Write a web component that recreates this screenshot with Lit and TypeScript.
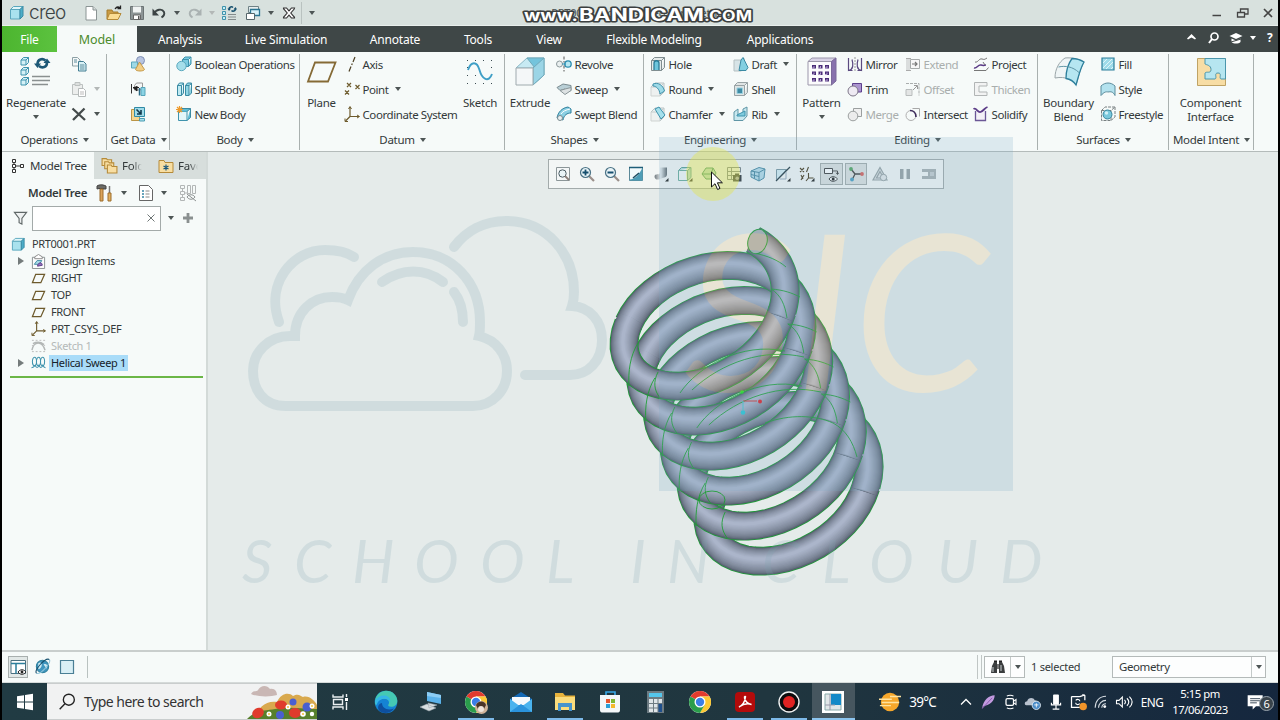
import { LitElement, html, css, svg, nothing } from 'lit';
import { customElement, property } from 'lit/decorators.js';
import { classMap } from 'lit/directives/class-map.js';
import { styleMap } from 'lit/directives/style-map.js';

const cube = svg`<path d="M1.5 4.5h9.5v9.5h-9.500z" fill="#a9e2ee" stroke="#5aa7bd"/><path d="M1.500 4.500l3-3h9.500l-3 3z" fill="#e0f6fa" stroke="#5aa7bd"/><path d="M11 4.500l3-3v9.500l-3 3z" fill="#4cadc8" stroke="#3a8aa3"/>`;
const plane = svg`<path d="M5 3.500h9.500l-4 9h-9z" fill="none" stroke="#6d5a2c" stroke-width="1.300"/>`;
const csys = svg`<path d="M6 1v9.500h9M6 10.500l-4.500 4.500" fill="none" stroke="#6d5a2c" stroke-width="1.200"/><path d="M4.500 3l1.500-2.500 1.500 2.500M13 9l2.500 1.500-2.500 1.500M1 12.500v3h3" fill="none" stroke="#6d5a2c"/>`;
const chrome = svg`<circle cx="12" cy="12" r="11" fill="#fff"/><path d="M12 12L2.500 6.500A11 11 0 0 1 21.500 6.500H12z" fill="#e23b2e"/><path d="M12 12L21.500 6.500A11 11 0 0 1 12 23l4.500-8.500z" fill="#fcc934"/><path d="M2.500 6.500A11 11 0 0 0 12 23l4.700-8.300L12 12z" fill="#2a9d4c"/><path d="M12 6.500h9.500a11 11 0 0 1 0 10.500L16 12z" fill="#fcc934"/><circle cx="12" cy="12" r="5.500" fill="#fff"/><circle cx="12" cy="12" r="4.200" fill="#3b7fe8"/>`;
const mag = svg`<path d="M10 10l5 5" stroke="#9a8f8a" stroke-width="2.200"/><circle cx="6.500" cy="6.500" r="5" fill="#e9f4f7" stroke="#4a7285" stroke-width="1.200"/>`;
const box = (c: string) => svg`<path d="M1 6h9v9H1z" fill="#eef1f0" stroke="#cfd3d2"/><path d="M1 6l4-4h9v9l-4 4" fill="${c}" stroke="#b9c3c4"/><path d="M10 6l4-4M1 6h9v9" stroke="#c3cccc" fill="none"/>`;

const icons: Record<string, unknown> = {
  cube, plane, csys, chrome,
  // quick access bar
  new: svg`<path d="M3 1.500h7l3.500 3.500v10H3z" fill="#fff" stroke="#8b9494"/><path d="M10 1.500v3.500h3.500" fill="#d7dcdc" stroke="#8b9494"/>`,
  open: svg`<path d="M1 5h5l1 2h5v7H1z" fill="#c99b45" stroke="#a67c2d"/><path d="M3.500 8.500H15L12 14.500H1z" fill="#fbdc93" stroke="#b58a39"/><path d="M9 4c2-3 4-2 5-1M14.500 0.500v3h-3" fill="none" stroke="#222" stroke-width="1.300"/>`,
  save: svg`<path d="M1.500 1.500h13v13h-13z" fill="#8d9596" stroke="#6b7374"/><path d="M4 1.500h8v6H4z" fill="#f1f4f4"/><path d="M4.500 10h7v4.500h-7z" fill="#fff" stroke="#666"/><path d="M9 11h1.500v3.500H9z" fill="#555"/>`,
  undo: svg`<path d="M3 8.500c2-4 8-5.500 10-1.500 1 2.500-1 4.500-2.500 5.500" fill="none" stroke="#3b4344" stroke-width="1.900"/><path d="M1.500 3.500v7h6.500z" fill="#3b4344"/>`,
  redo: svg`<path d="M13 8.500c-2-4-8-5.500-10-1.500-1 2.500 1 4.500 2.500 5.500" fill="none" stroke="#aab2b2" stroke-width="1.900"/><path d="M14.500 3.500v7H8z" fill="#aab2b2"/>`,
  regen: svg`<path d="M1.500 1.500h3v3h-3zM1.500 6.500h3v3h-3zM1.500 11.500h3v3h-3z" fill="#c9edf4" stroke="#3f93ad"/><path d="M7 9.500h8M7 12h8M7 14.500h8" stroke="#858b8c"/><path d="M8 4.500c0-3 3-3 4-2M14.500 3.500c0 3-3 3-4 2" fill="none" stroke="#17506e" stroke-width="1.500"/><path d="M6.500 3.500h3.500l-2 2.500zM12.500 4.500H16l-1.500-2.500z" fill="#17506e"/>`,
  windows: svg`<path d="M3.500 1.500h10v6h-10z" fill="#e8eeee" stroke="#6f8287"/><path d="M5.500 4.500h9v6h-9z" fill="#d8f1f8" stroke="#2b7592" stroke-width="1.300"/><path d="M1.500 8.500h8v6h-8z" fill="#fff" stroke="#56666b"/>`,
  closeWin: svg`<path d="M2.500 3h3L8 5.800 10.500 3h3l-.3 1L9.800 8l3.700 4.300v.7h-3L8 10.200 5.500 13h-3v-.7L6.200 8 2.500 3.700z" fill="#fff" stroke="#333" stroke-width="1.100"/>`,
  // window frame
  minimize: svg`<path d="M3.500 10.500h8.500" stroke="#444" stroke-width="1.500"/>`,
  restore: svg`<path d="M2.500 7.500h7v4.500h-7zM5.500 7v-3h7.500v5h-3" fill="none" stroke="#444" stroke-width="1.300"/>`,
  close: svg`<path d="M4 4l8 8M12 4l-8 8" stroke="#444" stroke-width="1.700"/>`,
  chevUp: svg`<path d="M3 8.500l4.500-4.500 4.500 4.500-1 1-3.500-2-3.500 2z" fill="#fff"/>`,
  find: svg`<circle cx="8.500" cy="6.500" r="3.500" fill="none" stroke="#fff" stroke-width="1.700"/><path d="M6 9l-3 4" stroke="#fff" stroke-width="2"/>`,
  learn: svg`<path d="M8 3l6.500 3L8 9 1.500 6z" fill="#fff"/><path d="M3.500 8.500v3.500c2 2 7 2 9 0V8.500L8 10.500z" fill="#fff"/><path d="M3 12l10-3" stroke="#3f4747"/>`,
  // operations
  regenBig: svg`<g stroke="#3f93ad" fill="#d4f1f7"><path d="M1 4h5v5H1zM1 4l2.500-2.500H8.500L6 4M6 9l2.500-2.500v-5M1 14h5v5H1zM1 14l2.500-2.500h5L6 14M6 19l2.500-2.500v-5M1 24h5v5H1zM1 24l2.500-2.500h5L6 24M6 29l2.500-2.500v-5"/></g><path d="M12 20.500h18M12 24.500h18M12 28.500h16" stroke="#8a9090" stroke-width="1.300"/><path d="M17.500 8c0-5 5-6 8-3.500M27 6.500c0 5-5 6-8 3.500" fill="none" stroke="#1d5876" stroke-width="2.600"/><path d="M14 7.500h7l-3.500 4.500zM23.500 7h7L27 2.500z" fill="#1d5876"/>`,
  copy: svg`<path d="M1.500 1.500h5l2.500 2.500v6H1.500z" fill="#f4f7f7" stroke="#8ca0a5"/><path d="M7.500 5.500h5l2.500 2.500v7h-7.500z" fill="#d9f1f6" stroke="#427d92"/><path d="M3 4h3M3 6h3M9 9h4.500M9 11h4.500M9 13h4.500" stroke="#5b8c9c"/>`,
  paste: svg`<path d="M1.500 3.500h10v10h-10z" fill="#eceeed" stroke="#bcc1c0"/><path d="M4 1.500h5v3H4z" fill="#dcdfde" stroke="#bcc1c0"/><path d="M7.500 7.500h5l2 2v6h-7z" fill="#fff" stroke="#b5baba"/><path d="M9 11h4M9 13h4" stroke="#bbb"/>`,
  del: svg`<path d="M1.500 2.500l12.500 11.500M13.500 2.500L2 14" stroke="#444b4b" stroke-width="2.300"/>`,
  // get data
  shapes: svg`<circle cx="10.500" cy="4.500" r="4" fill="#b7c4e0" stroke="#8090b5"/><path d="M1.500 6h6v6h-6z" fill="#9ed9e6" stroke="#5aa7bd"/><path d="M9.500 6l5 7.500c-1 2-8 2-9 0z" fill="#f2ce85" stroke="#c49a4b"/>`,
  importA: svg`<path d="M1.500 3v9.500" stroke="#333"/><path d="M4.500 4.500l2-2.500h6v4l-2 3h-6z" fill="#f5f7f7" stroke="#999"/><path d="M11 6.500h4v8h-4z" fill="#8bd3e4" stroke="#56a5ba"/><path d="M3 6.500h6M7 5v5L3 6.500" fill="#222" stroke="#222"/><path d="M9.500 7v7.500" stroke="#2b6a85" stroke-width="1.500"/>`,
  importB: svg`<path d="M1.500 3.500h8v11h-8z" fill="#f5d58f" stroke="#bb9445"/><path d="M4.500 1.500h10v9h-10z" fill="#9fdbe9" stroke="#2f8aa5"/><path d="M6.500 3.500l4 4M11 4v4h-4" stroke="#123a4d" stroke-width="1.600" fill="none"/><path d="M9.500 12.500h5v2.500h-5z" fill="#a7e0ec" stroke="#4a9cb3"/>`,
  // body
  bool: svg`<path d="M6.500 3.500h6v7h-6zM6.500 3.500l2.500-2.500h6l-2.500 2.500M12.500 10.500l2.500-2.500V1" fill="#7bcbe0" stroke="#3f93ad"/><circle cx="5.500" cy="10" r="4.700" fill="#a5deea" stroke="#5ba9be"/>`,
  split: svg`<path d="M1.500 4.500h4v10h-4zM1.500 4.500l2-2.500h4l-2 2.500M5.500 14.500l2-2.500V2" fill="#bfeaf2" stroke="#3a8aa3"/><path d="M9.500 4.500h3.500v10H9.500zM9.500 4.500l2-2.500h4l-2 2.500M13 14.500l2.500-2.500V2" fill="#8fd5e4" stroke="#3a8aa3"/>`,
  newBody: svg`<path d="M2.500 5.500h8.500v9H2.500z" fill="#e3f6f9" stroke="#3f93ad"/><path d="M2.500 5.500l3-3h9l-3.500 3M11 14.500l3.500-3v-9" fill="#5fbdd6" stroke="#3a8aa3"/><path d="M3.500 0v7M0 3.500h7M1 1l5 5M6 1L1 6" stroke="#ee9a2b" stroke-width="1.200"/>`,
  // datum
  planeBig: svg`<path d="M9 6.500h20.500L22 25.500H2z" fill="none" stroke="#856a36" stroke-width="1.800"/>`,
  axis: svg`<path d="M11 1l-2 5M8.300 7.500l-.6 1.500M7 10.500l-2 5" stroke="#4d3f22" stroke-width="1.200"/>`,
  point: svg`<path d="M3 2l4 4M7 2L3 6M11.500 4l4 4M15.500 4l-4 4M1 9.500l4 4M5 9.500l-4 4" stroke="#6d5a2c" stroke-width="1.200"/>`,
  sketchBig: svg`<g fill="#3a4a50"><path d="M3 4h1v1H3zM11 4h1v1h-1zM19 4h1v1h-1zM27 4h1v1h-1zM3 11h1v1H3zM27 11h1v1h-1zM3 19h1v1H3zM11 19h1v1h-1zM27 19h1v1h-1zM3 27h1v1H3zM11 27h1v1h-1zM19 27h1v1h-1zM27 27h1v1h-1z"/></g><path d="M4 14c3-9 9-9 11.500 0s9 13.500 12.500 4" fill="none" stroke="#3f9fc6" stroke-width="1.900"/>`,
  // shapes
  extrudeBig: svg`<path d="M2 12l11-10h17L19 12z" fill="#c7eaf3" stroke="#8bb8c6"/><path d="M13 2h17v17l-9 8V12z" fill="#74c4dc" stroke="#71a9ba"/><path d="M19 12L30 2v17L19 29z" fill="#9bd5e6" stroke="#71a9ba"/><path d="M2 12h17v17H2z" fill="#f4f7f8" stroke="#9faaae"/>`,
  revolve: svg`<circle cx="3.500" cy="8" r="3" fill="#e9efef" stroke="#8d999c"/><circle cx="12" cy="8" r="3.200" fill="#b8e8f2" stroke="#2b8db0" stroke-width="1.300"/><path d="M8 0.500v6M8 9.500v6" stroke="#555" stroke-dasharray="3 1.500"/><path d="M6 8h4" stroke="#2b8db0"/>`,
  sweep: svg`<path d="M1 6.500l6-3.500 8 1.500v5L9 11V8L4 9.500z" fill="#b9cfd6" stroke="#7a8b90"/><path d="M4 9.500l5-1.500 6-1.500v3L9 13.500z" fill="#dde2e3" stroke="#8b9699"/>`,
  blend: svg`<path d="M1 12C2 6 6 2 12 1l3 2v4C11 7 8 9 7 14z" fill="#8cd0e3" stroke="#2d7f9c"/><circle cx="4" cy="12" r="2.500" fill="#e9f1f3" stroke="#7a8b90"/><path d="M5 8c2-3 5-4 9-5" stroke="#fff" fill="none"/>`,
  // engineering
  hole: svg`<path d="M1.500 4.500h10v10h-10zM1.500 4.500l3-3h10l-3 3M11.500 14.500l3-3v-10" fill="#e4eaea" stroke="#7f8d90"/><path d="M4 14V7c0-3 5-3 5 0v7" fill="#6cc5dc" stroke="#2a7c98" stroke-width="1.300"/>`,
  round: svg`${box('#edf1f1')}<path d="M3 3c5-2 10 1 11.500 7L10 13C9.500 8 6 5 3 5z" fill="#9edbe8" stroke="#3f93ad"/>`,
  chamfer: svg`${box('#edf1f1')}<path d="M5 3l4-2 6 8-4 4z" fill="#a5e0ec" stroke="#3f93ad"/>`,
  draft: svg`<path d="M1 4h7l3-2v11l-3 2H1z" fill="#d7e4e7" stroke="#b5c0c2"/><path d="M8 4l2-2.500 5 10-2 3H6z" fill="#82cfe1" stroke="#3a8aa3"/>`,
  shell: svg`<path d="M1.500 4.500h10v10h-10zM1.500 4.500l3-3h10l-3 3M11.500 14.500l3-3v-10" fill="#dfe4e4" stroke="#98a3a5"/><path d="M4 7h5.500v5.500H4z" fill="#3f8ba4" stroke="#9ad2e0"/>`,
  rib: svg`<path d="M1 6l4-3v6h5V3l4-2v9l-4 4.500H1z" fill="#c9e8ef" stroke="#5f96a6"/><path d="M4 9l8-4v5H4z" fill="#7fcbdd" stroke="#3f93ad"/>`,
  // editing
  patternBig: svg`<path d="M2 5.500h23.500v23.500H2z" fill="#fbfbfc" stroke="#9c97ab"/><path d="M2 5.500l4-3.500h24l-4.500 3.500z" fill="#d9d3e6" stroke="#9c97ab"/><path d="M25.500 5.500L30 2v23l-4.500 4z" fill="#8871ad" stroke="#7b6a9a"/><g fill="#4a2d78"><path d="M6 9h4v3.500H6zM12.500 9h4v3.500h-4zM19 9h4v3.500h-4zM6 15.500h4V19H6zM12.500 15.500h4V19h-4zM19 15.500h4V19h-4zM6 22h4v3.500H6zM12.500 22h4v3.500h-4zM19 22h4v3.500h-4z"/></g><path d="M6 12h2v-2M12.500 12h2v-2M19 12h2v-2M6 18.500h2v-2M12.500 18.500h2v-2M19 18.500h2v-2M6 25h2v-2M12.500 25h2v-2M19 25h2v-2" fill="none" stroke="#b6a5d0"/>`,
  mirror: svg`<path d="M1.500 2v12.500c5-1 5-6 3.500-11M14.500 2v12.500c-5-1-5-6-3.500-11M1.500 14.500h4M14.500 14.500h-4" fill="none" stroke="#5b4a80" stroke-width="1.200"/><path d="M8 1v14" stroke="#999" stroke-dasharray="2 1"/>`,
  trim: svg`<path d="M5.500 2.500h9v8.500h-4.500L5.500 6z" fill="#ab94cf" stroke="#5c3f8c"/><circle cx="6" cy="10" r="5" fill="#eeeaf3" stroke="#7d7688"/>`,
  merge: svg`<path d="M6.500 2.500h8v8h-8z" fill="#f0f0f0" stroke="#9b9f9f"/><circle cx="6" cy="10" r="4.800" fill="#ececec" stroke="#9b9f9f"/>`,
  extend: svg`<path d="M1 2h4v12H1z" fill="#dadddd"/><path d="M1 2.500h5M1 14.500h5" stroke="#aaa"/><path d="M5.500 3.500h9v9h-9z" fill="#f7f7f7" stroke="#a6aaaa"/><path d="M7 8h5M10 6l2 2-2 2" fill="none" stroke="#777" stroke-width="1.200"/>`,
  offset: svg`<path d="M1 2.500h13v12" fill="none" stroke="#a9adad" stroke-dasharray="3 1"/><path d="M1 8.500h6v6H1z" fill="#e3e5e5" stroke="#b9bdbd"/><path d="M8 9l4-4M9 4.500h3.500V8" stroke="#999" fill="none"/>`,
  intersect: svg`<path d="M7.500 2.500h7v8" fill="none" stroke="#a8a8a8"/><circle cx="6" cy="9.500" r="5" fill="none" stroke="#b0b0b0"/><path d="M5 4.500c3 0 6 2 6 6.500" fill="none" stroke="#3e2c5c" stroke-width="1.600"/>`,
  project: svg`<path d="M2 6c3 1 4-4 7-3s3 0 5-1" fill="none" stroke="#777"/><path d="M1 12c3 1 4-4 7-3s3 0 5 0" fill="none" stroke="#5b3b87" stroke-width="1.500"/><path d="M1 14.500h12l2.500-3M10 6l2 3" stroke="#777" fill="none"/>`,
  thicken: svg`<path d="M14 1.500H1.500v13H14v-3.500H6v-6h8z" fill="#f2f3f3" stroke="#b1b5b5"/>`,
  solidify: svg`<path d="M2.500 5v9.500h10V5" fill="#f3f1f6" stroke="#6b5796" stroke-width="1.300"/><path d="M0.500 3c3-2 4 4 7 3s4-4 7-5" fill="none" stroke="#5b3b87" stroke-width="1.800"/>`,
  // surfaces
  boundaryBig: svg`<path d="M12 2c5-.5 12 0 19 4-4 7-5 13-8 23-3-5-10-9-21-7C2 13 6 6 12 2z" fill="#eff5f6" stroke="#9aa5a8"/><path d="M19 2.500c4 0 8 1 12 3.500-4 7-5 13-8 23-2-3-6-6-10-6.500C13 14 15 8 19 2.500z" fill="#b5e6f1" stroke="#2d7f9c" stroke-width="1.300"/><path d="M5.500 11c7-1.500 14-.5 20.500 5.500" fill="none" stroke="#5f96a6"/>`,
  fill: svg`<path d="M2 2h12v12H2z" fill="#9fdbe9" stroke="#2d7f9c" stroke-width="1.200"/><path d="M3 7l4-4M3 12l9-9M6 13l7-7M11 13l2-2" stroke="#dff4f8"/>`,
  style: svg`<path d="M1 5c4-4 10-4 14 0v9.500c-2-4-4-4-7-3.500-2-.5-4 0-7 3.500z" fill="#b3e2ee" stroke="#5b8c9c"/>`,
  freestyle: svg`<path d="M1.500 4.500h9.500v10h-9.500zM1.500 4.500l3.500-3.500h10l-4 3.500M15 1v10l-4 3.500" fill="none" stroke="#777f80" stroke-dasharray="3 1"/><circle cx="7.500" cy="8.500" r="4.500" fill="#79c8dc" stroke="#38869e"/><circle cx="6.500" cy="7" r="1.700" fill="#d2f0f6"/>`,
  intentBig: svg`<path d="M2.500 2.500h28v27h-28z" fill="#f7dda5" stroke="#bfa365"/><path d="M10 2.500h20.500V23h-4.500c-2.500-1 1.500-6-3-6s-.5 5-3 6H10v-6c1.500-2 6 1 6-3.500S11.500 9 10 8z" fill="#b6e6f0" stroke="#4b96ac"/>`,
  // tree
  treeTab: svg`<path d="M2.500 1.500h3v3h-3zM2.500 6.500h3v3h-3zM2.500 11.500h3v3h-3zM10.500 6.500h3v3h-3z" fill="#fff" stroke="#333"/><path d="M4 4.500v2M4 9.500v2M5.500 8h5" stroke="#333"/>`,
  folders: svg`<g fill="#f8dea2" stroke="#b58a39"><path d="M1 1.500h4l1 1h4v5.500H1z"/><path d="M3.500 4.500h3.500l1 1h4v5.500H3.500z"/><path d="M6 7.500h3.500l1 1.500h4.500v6H6z"/></g>`,
  favs: svg`<path d="M1 2.500h5l1 2h8v10H1z" fill="#f8dea2" stroke="#b58a39"/><path d="M8 6.500v6M5.500 8l5 3M10.500 8l-5 3" stroke="#1a567a" stroke-width="1.200"/>`,
  tools: svg`<path d="M1 2c3-2 7-1 9 0v3H7v-.5H3L1 5z" fill="#6a6a66" stroke="#444"/><path d="M4 5h3v12H4z" fill="#dba45b" stroke="#9c6d2c"/><path d="M13.500 2v7" stroke="#777" stroke-width="1.500"/><path d="M12 9h3v8h-3z" fill="#e3b15e" stroke="#9c6d2c"/>`,
  list: svg`<path d="M1.500 1.500h9l4 4v11h-13z" fill="#fff" stroke="#666"/><path d="M4 7h2M4 10h2M4 13h2" stroke="#3685a5" stroke-width="1.500"/><path d="M7.500 7h4M7.500 10h4M7.500 13h4" stroke="#888"/>`,
  hideTree: svg`<path d="M1.500 1.500h4v3h-4zM1.500 7.500h4v3h-4zM1.500 13.500h4v3h-4zM3.500 4.500v3M3.500 10.500v3M5.500 9h3M8.500 1.500h3v8h-3zM13.500 1.500h3v8h-3z" fill="none" stroke="#b2b6b6"/><path d="M8 13c2-3 6-3 8 0-2 3-6 3-8 0zM8 10l9 7" fill="none" stroke="#8e9393"/>`,
  funnel: svg`<path d="M1.500 1.500h13l-5 6.500v6l-3-1.500V8z" fill="#eef1f1" stroke="#5f6767" stroke-width="1.200"/>`,
  plus: svg`<path d="M8 3v10M3 8h10" stroke="#8a9090" stroke-width="2.800"/>`,
  closeThin: svg`<path d="M3.500 4.500l7 7M10.500 4.500l-7 7" stroke="#6f7676"/>`,
  design: svg`<path d="M1.500 3.500h13v12h-13z" fill="#fbfcfc" stroke="#888f90"/><path d="M4 3l4-2.500L12 3v2H4z" fill="#fff" stroke="#888"/><path d="M3.500 11l3-4h5l-2.500 4z" fill="#a9dbe7" stroke="#3f8ca3"/><path d="M7 13c0-4 5-5 5-1z" fill="#9276bd" stroke="#5b3b87"/>`,
  sketchOff: svg`<path d="M1 2.500h2M5 2.500h2M9 2.500h2M13 2.500h2M1 14.500h2M5 14.500h2M9 14.500h2M13 14.500h2M1 8h1M14 8h1" stroke="#bbb"/><path d="M1 13C3 3 12 3 15 13M2 6c4-2 8-2 12 1" fill="none" stroke="#b3b7b6" stroke-width="1.500"/>`,
  helix: svg`<g fill="none" stroke="#3f93ad" stroke-width="1.100"><ellipse cx="3.700" cy="7" rx="2.200" ry="4.500"/><ellipse cx="8" cy="7" rx="2.200" ry="4.500"/><ellipse cx="12.300" cy="7" rx="2.200" ry="4.500"/><path d="M0.500 13.500c2 0 3-1 4-2.500 1 3 3 3 4 0 1 3 3 3 4 0 1 2 2 2.500 3 2.500"/></g>`,
  // in-graphics toolbar
  refit: svg`<path d="M1.500 1.500h13v13h-13z" fill="#f4f7f7" stroke="#8c9698"/><circle cx="7.500" cy="7.500" r="3.700" fill="#e9f4f7" stroke="#4a5b62"/><path d="M10 10l4 4" stroke="#8a7f7a" stroke-width="1.800"/>`,
  zoomIn: svg`${mag}<path d="M6.500 3.500v6M3.500 6.500h6" stroke="#164f6e" stroke-width="1.800"/>`,
  zoomOut: svg`${mag}<path d="M3.500 6.500h6" stroke="#164f6e" stroke-width="2"/>`,
  repaint: svg`<path d="M1.500 1.500h13v13h-13z" fill="#f4fafb" stroke="#5c8998"/><path d="M14.500 1.500v13h-13v-1C7 13 11 9 14.500 1.500z" fill="#4f9db6"/><path d="M5 12l6-5" stroke="#1f4c60" stroke-width="1.500"/><path d="M1 1.500h14" stroke="#1f5e78" stroke-width="1.500"/>`,
  shading: svg`<defs><linearGradient id="sh"><stop offset="0" stop-color="#727b80"/><stop offset=".5" stop-color="#e6ebed"/><stop offset="1" stop-color="#5f686d"/></linearGradient></defs><path d="M7 1.500h7V8c0 3-2 3.500-4.500 4-2 .5-3 2-6 1.500C1 12 1 9 3 8.500c2-.3 4 0 4-2z" fill="url(#sh)"/><path d="M15.500 12v3.500H12z" fill="#222"/>`,
  display: svg`<path d="M1.500 4.500h9v10h-9z" fill="#f3f8f6" stroke="#6fae9f"/><path d="M1.500 4.500l3-3h9.500v10l-3.500 3v-10l3.500-3" fill="#b1dcd8" stroke="#5c9f98"/><path d="M15.500 12v3.500H12z" fill="#222"/>`,
  orient: svg`<path d="M1 8l4-6h7l3 5-3 6H5z" fill="#bfe2c0" stroke="#3f9460"/><path d="M1 8h9l2-6M10 8l2 5" fill="none" stroke="#3f9460"/>`,
  views: svg`<path d="M1.500 1.500h13M1.500 1.500v12h6M1.500 5.500h13M1.500 9.500h7M5.500 1.500v12M14.500 1.500v5" fill="none" stroke="#7a8385"/><path d="M7 9h8.500v6.500H7zM9 7.500h4V9H9z" fill="#35393a"/><circle cx="11.200" cy="12.200" r="1.800" fill="#aab"/>`,
  persp: svg`<path d="M1 5l8-3.500 6 1.500-1 9-5 3-8-4z" fill="#b6dbe8" stroke="#4c8ba3"/><path d="M1 5l8 1.500L15 3M9 6.500V15M4.500 5.500v7M1 8.500l8 2" fill="none" stroke="#4c8ba3"/>`,
  section: svg`<path d="M1.500 3.500h10l-9 10h-1z" fill="#d7edf3" stroke="#7b98a2"/><path d="M15 1L1 15" stroke="#2a3d45" stroke-width="1.300"/><path d="M11 6v7H5" fill="none" stroke="#9ab"/><path d="M15.500 12v3.500H12z" fill="#222"/>`,
  datums: svg`<path d="M1 2l4 4M5 2L1 6M9.500 1l-2 5M2 9l2 4M5 9l-3 5M9.500 7v5h5M9.500 12L7 15" fill="none" stroke="#4d3f22" stroke-width="1.100"/><path d="M15.500 12v3.500H12z" fill="#222"/>`,
  annot: svg`<path d="M1.500 2.500h8v5h-8zM9.500 5h5v3M13 6.500l1.500 2 1.500-2" fill="#fff" stroke="#444"/><path d="M6 13c2-3 6-3 8.500 0-2.500 3-6.500 3-8.500 0z" fill="#fff" stroke="#333"/><circle cx="10.200" cy="13" r="1.500" fill="#222"/>`,
  spin: svg`<path d="M7 8L3 3M7 8h7M7 8l-3 6" stroke="#444" stroke-width="1.300"/><circle cx="3" cy="3" r="1.900" fill="#55a763"/><circle cx="14" cy="8" r="1.900" fill="#d9635e"/><circle cx="4" cy="13.500" r="1.900" fill="#4e9fc4"/>`,
  warn: svg`<path d="M8 1.500L15 14H1zM8 5.500L11.500 12h-7z" fill="#dfe3e4" stroke="#9aa3a5" stroke-width="1.200"/><circle cx="11.500" cy="11.500" r="3.200" fill="#e3e7e8" stroke="#9aa3a5"/>`,
  pause: svg`<path d="M3 3h3.500v10H3zM9.500 3H13v10H9.500z" fill="#9aa3a6"/>`,
  resume: svg`<path d="M1 3h14v10H1v-3h6V6H1z" fill="#a9b1b3"/><path d="M9 6h4v4H9z" fill="#c7cdd0"/>`,
  // status bar
  panes: svg`<path d="M1 1.500h14.500v13H1z" fill="#fff" stroke="#4a7080"/><path d="M1 4.500h14M6 4.500v10" stroke="#2d7f9c" stroke-width="1.500"/><path d="M8 13c2-3 6-3 8 0-2 3-6 3-8 0z" fill="#fff" stroke="#222"/><circle cx="12" cy="13" r="1.400" fill="#222"/>`,
  globe: svg`<circle cx="8" cy="8" r="5.800" fill="#3f96bf" stroke="#2d7f9c"/><path d="M4 5c3-2 4 1 3 3s-2 3-3 2zM9 6c3-1 4 1 3 4z" fill="#cdebf3"/><path d="M2.500 14.500C-1 12 11-1 14.500 1.500" fill="none" stroke="#17506e"/><path d="M14.500 1.500c2 3-8 14-12 13" fill="none" stroke="#8fc4d8"/>`,
  square: svg`<path d="M1.500 1.500h13v13h-13z" fill="#d9eff5" stroke="#4a7f95" stroke-width="1.200"/>`,
  binoc: svg`<path d="M2 7l2-4h3v11H1zM15 14H9V3h3l2 4z" fill="#3a3d3e"/><path d="M7 5h2v5H7z" fill="#777"/><path d="M3 8v5M11 6v6" stroke="#aab0b2" stroke-width="1.300"/><path d="M4 1.500h3V3H4zM9 1.500h3V3H9z" fill="#222"/>`,
  // taskbar, 24px grid
  start: svg`<path d="M4 6.200l7-1v6.300H4zM12 5l8-1.200v7.700h-8zM4 12.500h7v6.300l-7-1zM12 12.500h8v7.700L12 19z" fill="#fff"/>`,
  search: svg`<circle cx="14" cy="9.500" r="6" fill="none" stroke="#222" stroke-width="1.500"/><path d="M9.700 14L4 20" stroke="#222" stroke-width="1.500"/>`,
  taskview: svg`<path d="M4 4.500V7h10V4.500M4 19.500V17h10v2.500M4.500 9.500h9v5h-9z" fill="none" stroke="#e9eef0" stroke-width="1.400"/><path d="M17.500 4v3M17.500 12v8" stroke="#e9eef0" stroke-width="1.400"/><path d="M16 8h3v3h-3z" fill="#fff"/>`,
  edge: svg`<circle cx="12" cy="12" r="11.300" fill="#1583d4"/><path d="M1 11C2 4 7 .7 12 .7c7 0 11.300 5 11.300 10 0 4-3 6-6 6-2.500 0-3.500-1-3-2 2-2.500 0-6-4-6-5 0-8 3-9.300 7z" fill="#45c8b3"/><path d="M1 11c2-4 6-6 10-5.500 4 .5 6 4 5 7-1-3-3-4-5-4-4 0-7 2-8.500 7z" fill="#35b5e8"/><path d="M8 13c0 5 5 8 12 5.500C17 23 11 24 7 22c-4-2-4-8 1-9z" fill="#0e4f9e"/>`,
  remote: svg`<path d="M8 2l14 3v9L8 11z" fill="#5ab2ea"/><path d="M8 2l14 3v3L8 6z" fill="#8ccdf4"/><path d="M9 13l9 2-8 3zM1 17l7-3 9 4-7 3z" fill="#d8dee1" stroke="#9aa5aa" stroke-width=".5"/>`,
  chromeUser: svg`${chrome}<circle cx="17.500" cy="17.500" r="6.500" fill="#d0b49b"/><path d="M12 15c3-5 9-4 10 0l-2 4h-6z" fill="#4a3528"/><circle cx="17" cy="19" r="3" fill="#efe5dc"/>`,
  mail: svg`<path d="M1 9l11-7 11 7v13H1z" fill="#1469b5"/><path d="M3 7h18v8H3z" fill="#f5f9fc"/><path d="M1 9l11 8 11-8v13H1z" fill="#4ab3ee"/><path d="M1 22l11-8 11 8z" fill="#2a93dc"/>`,
  explorer: svg`<path d="M2 3h8l2 2.500h10V20H2z" fill="#e8b33c"/><path d="M2 7h20v13H2z" fill="#fbdc7c"/><path d="M5 13h14v8h-3v-4H8v4H5z" fill="#4793cc"/>`,
  store: svg`<path d="M8 5V2h9v3" fill="none" stroke="#37a8e6" stroke-width="1.600"/><path d="M2 5h20v15c0 2-1 2.500-3 2.500H5c-2 0-3-.5-3-2.500z" fill="#f4f7f9"/><path d="M8 9h4v4H8z" fill="#e8562f"/><path d="M13 9h4v4h-4z" fill="#80b934"/><path d="M8 14h4v4H8z" fill="#2a9fd8"/><path d="M13 14h4v4h-4z" fill="#f5b92e"/>`,
  calc: svg`<path d="M4 1h17v22H4z" fill="#6d7b82"/><path d="M6 3h13v4H6z" fill="#54c6ec"/><path d="M6 9h4v4H6zM11 9h3.500v4H11zM15.500 9H19v4h-3.500zM6 14h4v3.500H6zM11 14h3.500v3.500H11zM6 18.500h4V22H6zM11 18.500h3.500V22H11z" fill="#dfe5e8"/><path d="M15.500 14H19v8h-3.500z" fill="#20508c"/>`,
  acrobat: svg`<rect x="2" y="2" width="20" height="20" rx="4" fill="#b30b0b"/><path d="M6 17c3-1 6-5 6.500-10 .5-1-1.500-1-1 1 1 4 4 6 7 6.500-4-1.500-9 0-12.500 2.500z" fill="none" stroke="#fff" stroke-width="1.400"/>`,
  record: svg`<circle cx="12" cy="12" r="10" fill="#0c0c0e" stroke="#f2f2f2" stroke-width="1.400"/><circle cx="12" cy="12" r="6" fill="#e02222"/>`,
  creoApp: svg`<path d="M1 1h22v22H1z" fill="#fff"/><path d="M4 4h16v16H4z" fill="#e2e7e9" stroke="#8aa"/><path d="M10 4h10v11H10z" fill="#1489c8"/><path d="M4 15h10" stroke="#99a" /><path d="M9 4v16" stroke="#99a"/>`,
  sun: svg`<circle cx="12" cy="12" r="10" fill="#f6a72b"/><path d="M0 9h14M3 12.500h19M1 16h12M12 6h12" stroke="#ffe3a0" stroke-width="1.500"/>`,
  trayUp: svg`<path d="M6 15l6-6 6 6" fill="none" stroke="#fff" stroke-width="1.500"/>`,
  feather: svg`<path d="M5 20C6 10 13 4 20 4c0 7-6 12-13 13z" fill="#c39be0"/><path d="M5 20L17 7" stroke="#7e4fa5"/>`,
  meet: svg`<rect x="6" y="8" width="9" height="8" rx="1.500" fill="none" stroke="#fff" stroke-width="1.500"/><path d="M15 11l3-2v6l-3-2M7 5c2-1.500 6-1.500 8 0M7 19c2 1.500 6 1.500 8 0" stroke="#fff" stroke-width="1.300" fill="none"/>`,
  cloudSync: svg`<path d="M4 16c-3-1-2-5 1-5 1-5 8-5 9-1 4 0 5 5 2 6z" fill="#b9c2ce"/><circle cx="16" cy="16" r="5" fill="#4b8cc8" stroke="#e8f0f8"/><path d="M13.500 15.500h5M16 13.500v5" stroke="#fff"/>`,
  mic: svg`<rect x="8.500" y="3" width="7" height="12" rx="1" fill="#fff"/><path d="M6.500 13v2.500h11V13M12 16v4M8 20.500h8" fill="none" stroke="#fff" stroke-width="1.400"/>`,
  update: svg`<path d="M3 5.500h10M19 10V4.500l-3-1.500M3 5.500v13h10M13 5.500l6-2" fill="none" stroke="#fff" stroke-width="1.500"/><path d="M8 10c2-2 5-1 5 1M13 14c-2 2-5 1-5-1" fill="none" stroke="#fff" stroke-width="1.300"/><circle cx="17" cy="17.500" r="4.500" fill="#f0942a"/>`,
  wifi: svg`<path d="M5 19C5 11 10 5 18 5M9 19c0-5 4-9 9-9M13 19c0-3 2-5 5-5" fill="none" stroke="#d5dce2" stroke-width="1.300"/><circle cx="16.500" cy="17.500" r="1.700" fill="#fff"/>`,
  volume: svg`<path d="M3 10h3l4-4v12l-4-4H3z" fill="none" stroke="#fff" stroke-width="1.300"/><path d="M12.500 9.500c1.500 1.500 1.500 3.500 0 5M15.500 7.500c3 3 3 6 0 9M18.500 5.500c4 4 4 9 0 13" fill="none" stroke="#fff" stroke-width="1.300"/>`,
  notify: svg`<path d="M2 4h18v13h-8l-4 4v-4H2z" fill="#fff"/><path d="M5 8h12M5 10.500h12M5 13h8" stroke="#1b2b3c"/>`,
};

const icon = (name: string, size = 16, grid = size) =>
  html`<svg class="icon" width=${size} height=${size} viewBox="0 0 ${grid} ${grid}">${icons[name]}</svg>`;

const arrow = (cls = '') => html`<i class="arrow ${cls}"></i>`;

type Item = { icon: string; text?: string; menu?: boolean; off?: boolean };
type Column = { width: number; big?: boolean; lines?: string[]; icon?: string; menu?: boolean; items?: Item[] };
type Group = { label: string; width: number; pad?: number; columns: Column[] };

const GROUPS: Group[] = [
  {
    label: 'Operations', width: 105, columns: [
      { width: 68, big: true, icon: 'regenBig', lines: ['Regenerate'], menu: true },
      { width: 36, items: [{ icon: 'copy' }, { icon: 'paste', menu: true, off: true }, { icon: 'del', menu: true }] },
    ],
  },
  { label: 'Get Data', width: 63, pad: 22, columns: [{ width: 30, items: [{ icon: 'shapes' }, { icon: 'importA' }, { icon: 'importB' }] }] },
  {
    label: 'Body', width: 130, pad: 5, columns: [
      { width: 124, items: [{ icon: 'bool', text: 'Boolean Operations' }, { icon: 'split', text: 'Split Body' }, { icon: 'newBody', text: 'New Body' }] },
    ],
  },
  {
    label: 'Datum', width: 205, columns: [
      { width: 43, big: true, icon: 'planeBig', lines: ['Plane'] },
      { width: 113, items: [{ icon: 'axis', text: 'Axis' }, { icon: 'point', text: 'Point', menu: true }, { icon: 'csys', text: 'Coordinate System' }] },
      { width: 48, big: true, icon: 'sketchBig', lines: ['Sketch'] },
    ],
  },
  {
    label: 'Shapes', width: 139, columns: [
      { width: 50, big: true, icon: 'extrudeBig', lines: ['Extrude'] },
      { width: 88, items: [{ icon: 'revolve', text: 'Revolve' }, { icon: 'sweep', text: 'Sweep', menu: true }, { icon: 'blend', text: 'Swept Blend' }] },
    ],
  },
  {
    label: 'Engineering', width: 153, pad: 5, columns: [
      { width: 83, items: [{ icon: 'hole', text: 'Hole' }, { icon: 'round', text: 'Round', menu: true }, { icon: 'chamfer', text: 'Chamfer', menu: true }] },
      { width: 64, items: [{ icon: 'draft', text: 'Draft', menu: true }, { icon: 'shell', text: 'Shell' }, { icon: 'rib', text: 'Rib', menu: true }] },
    ],
  },
  {
    label: 'Editing', width: 241, columns: [
      { width: 49, big: true, icon: 'patternBig', lines: ['Pattern'], menu: true },
      { width: 58, items: [{ icon: 'mirror', text: 'Mirror' }, { icon: 'trim', text: 'Trim' }, { icon: 'merge', text: 'Merge', off: true }] },
      { width: 68, items: [{ icon: 'extend', text: 'Extend', off: true }, { icon: 'offset', text: 'Offset', off: true }, { icon: 'intersect', text: 'Intersect' }] },
      { width: 64, items: [{ icon: 'project', text: 'Project' }, { icon: 'thicken', text: 'Thicken', off: true }, { icon: 'solidify', text: 'Solidify' }] },
    ],
  },
  {
    label: 'Surfaces', width: 131, columns: [
      { width: 61, big: true, icon: 'boundaryBig', lines: ['Boundary', 'Blend'] },
      { width: 68, items: [{ icon: 'fill', text: 'Fill' }, { icon: 'style', text: 'Style' }, { icon: 'freestyle', text: 'Freestyle' }] },
    ],
  },
  { label: 'Model Intent', width: 85, columns: [{ width: 83, big: true, icon: 'intentBig', lines: ['Component', 'Interface'] }] },
];

const TABS: [string, number][] = [
  ['File', 55], ['Model', 80], ['Analysis', 86], ['Live Simulation', 126], ['Annotate', 92],
  ['Tools', 74], ['View', 68], ['Flexible Modeling', 142], ['Applications', 110],
];

const TREE: { icon: string; text: string; level: number; open?: boolean; off?: boolean; selected?: boolean }[] = [
  { icon: 'cube', text: 'PRT0001.PRT', level: 0 },
  { icon: 'design', text: 'Design Items', level: 1, open: true },
  { icon: 'plane', text: 'RIGHT', level: 1 },
  { icon: 'plane', text: 'TOP', level: 1 },
  { icon: 'plane', text: 'FRONT', level: 1 },
  { icon: 'csys', text: 'PRT_CSYS_DEF', level: 1 },
  { icon: 'sketchOff', text: 'Sketch 1', level: 1, off: true },
  { icon: 'helix', text: 'Helical Sweep 1', level: 1, open: true, selected: true },
];

const VIEW_TOOLS = ['refit', 'zoomIn', 'zoomOut', 'repaint', 'shading', 'display', 'orient', 'views', 'persp', 'section', 'datums', 'annot', 'spin', 'warn', 'pause', 'resume'];
const PRESSED = ['annot', 'spin'];

const baseStyles = css`
  * {
    box-sizing: border-box;
  }
  .icon {
    display: block;
    flex: none;
  }
  .arrow {
    flex: none;
    width: 0;
    height: 0;
    border: 3.5px solid transparent;
    border-top: 4px solid #4d5555;
    border-bottom: 0;
  }
  .arrow.off {
    border-top-color: #b3b8b7;
  }
`;

@customElement('ribbon-group')
export class RibbonGroup extends LitElement {
  @property({ attribute: false }) group!: Group;

  static styles = [baseStyles, css`
    :host {
      display: flex;
      flex-direction: column;
      height: 100px;
      color: #33393a;
      white-space: nowrap;
      letter-spacing: -0.42px;
      background: linear-gradient(#a9b0af, #a9b0af) right 2px / 1px 96px no-repeat;
    }
    .columns {
      display: flex;
      height: 75px;
    }
    .big {
      display: flex;
      flex-direction: column;
      align-items: center;
      padding-top: 4px;
      line-height: 14px;
      letter-spacing: -0.25px;
    }
    .big .icon {
      margin-bottom: 8px;
    }
    .big .arrow {
      margin-top: 5px;
    }
    .item {
      display: flex;
      align-items: center;
      height: 25px;
      padding-left: 1px;
      padding-bottom: 1px;
      gap: 2.5px;
    }
    .item .arrow {
      margin-left: 4px;
    }
    .off {
      color: #a9aead;
    }
    .label {
      display: flex;
      align-items: center;
      justify-content: center;
      gap: 5px;
      height: 25px;
      letter-spacing: -0.3px;
    }
  `];

  renderColumn(c: Column) {
    const width = styleMap({ width: `${c.width}px` });
    if (c.big) {
      return html`
        <div class="big" style=${width}>
          ${icon(c.icon!, 32)}
          ${c.lines!.map(l => html`<span>${l}</span>`)}
          ${c.menu ? arrow() : nothing}
        </div>`;
    }
    return html`
      <div style=${width}>
        ${c.items!.map(i => html`
          <div class=${classMap({ item: true, off: !!i.off })}>
            ${icon(i.icon)}
            ${i.text ? html`<span>${i.text}</span>` : nothing}
            ${i.menu ? arrow(i.off ? 'off' : '') : nothing}
          </div>`)}
      </div>`;
  }

  render() {
    const g = this.group;
    return html`
      <div class="columns" style=${styleMap({ paddingLeft: `${g.pad ?? 0}px` })}>
        ${g.columns.map(c => this.renderColumn(c))}
      </div>
      <div class="label"><span>${g.label}</span>${arrow()}</div>
    `;
  }
}

// Helix projected on screen: centre drifts by STEP on every turn.
const ORIGIN = [699.5, 305];
const STEP = [16.8, 35];
const MAJOR = 89;
const MINOR = 63.5;
const T_START = -0.085;
const T_END = 5.6;

function helixPoint(t: number): [number, number] {
  const a = t * Math.PI * 2;
  const u = MAJOR * Math.cos(a);
  const v = MINOR * Math.sin(a);
  return [
    ORIGIN[0] + STEP[0] * t + 0.901 * u + 0.433 * v,
    ORIGIN[1] + STEP[1] * t - 0.433 * u + 0.901 * v,
  ];
}

function helixPath(from: number, to: number, dx = 0, dy = 0) {
  const pts: string[] = [];
  const n = 24;
  for (let i = 0; i <= n; i++) {
    const [x, y] = helixPoint(from + ((to - from) * i) / n);
    pts.push(`${(x + dx).toFixed(1)} ${(y + dy).toFixed(1)}`);
  }
  return 'M' + pts.join('L');
}

function mix(a: number[], b: number[], k: number) {
  return `rgb(${a.map((v, i) => Math.round(v + (b[i] - v) * k)).join(',')})`;
}

@customElement('spring-model')
export class SpringModel extends LitElement {
  static styles = css`
    :host {
      display: block;
    }
    svg {
      display: block;
    }
  `;

  renderTube() {
    const out = [];
    const piece = 0.5;
    const layers = 13;
    // far end first, so the upper coils cover the lower ones
    for (let t = T_END; t > T_START; t -= piece) {
      const from = Math.max(t - piece, T_START);
      const to = Math.min(t + 0.012, T_END);
      out.push(svg`<path d=${helixPath(from, t)} stroke="#1f9a38" stroke-width="28.800"/>`);
      for (let i = 0; i < layers; i++) {
        const k = i / (layers - 1);
        const color = mix([88, 98, 113], [171, 181, 202], Math.pow(k, 0.65));
        out.push(svg`<path d=${helixPath(from, to, -1.2 * k, -2.2 * k)} stroke=${color} stroke-width=${27.2 - 24 * k}/>`);
      }
    }
    return out;
  }

  renderEdges() {
    const out = [];
    for (let i = 0; i < 5; i++) {
      const move = `translate(${STEP[0] * i} ${STEP[1] * i})`;
      out.push(svg`<g transform=${move}>
        <path d="M638 343C630 356 628 372 629 386"/>
        <path d="M658 372C653 382 654 390 660 398"/>
        ${i < 4 ? svg`<path d="M771 289C784 290 792 293 800 297M771 289C781 295 785 305 787 318"/>` : nothing}
        ${i < 2 ? svg`<path d="M680 393C698 366 742 342 785 351M692 390C722 362 764 348 804 357"/>` : nothing}
      </g>`);
    }
    return out;
  }

  render() {
    return html`
      <svg width="1070" height="498" viewBox="208 152 1070 498">
        <g fill="none">${this.renderTube()}</g>
        <g fill="none" stroke="#1fa036" stroke-width="0.9">${this.renderEdges()}
          <path d="M754 253C768 256 778 260 786 267"/>
          <path d="M722 490C736 478 790 470 838 418C850 430 856 440 858 458" opacity="0"/>
          <path d="M765 423C790 414 815 415 833 423C846 430 853 442 857 457"/>
          <ellipse cx="712" cy="500" rx="13" ry="9"/>
        </g>
        <ellipse cx="757.500" cy="241.500" rx="9.500" ry="12.500" transform="rotate(18 757.500 241.500)" fill="#a9b0b4" stroke="#1f9a36"/>
        <path d="M743 401h14" stroke="#d03a3a"/><circle cx="760" cy="401.500" r="2" fill="#e0262c"/>
        <path d="M743 401v9" stroke="#49c5cf"/><circle cx="743" cy="412.500" r="2.300" fill="#2cc6d6"/>
        <circle cx="742" cy="392" r="1.800" fill="#22dd22"/>
      </svg>
    `;
  }
}

@customElement('model-tree')
export class ModelTree extends LitElement {
  static styles = [baseStyles, css`
    :host {
      display: block;
      box-sizing: border-box;
      width: 207px;
      background: #f6faf9;
      border-right: 2px solid #d3dad8;
      color: #33393a;
      white-space: nowrap;
    }
    .tabs {
      display: flex;
      height: 27px;
      background: #d7dedc;
    }
    .tab {
      display: flex;
      align-items: center;
      gap: 4px;
      overflow: hidden;
    }
    .tab.active {
      width: 92px;
      padding-left: 8px;
      background: #f6faf9;
      letter-spacing: -0.35px;
    }
    .tab.folders {
      width: 64px;
      padding-left: 7px;
    }
    .tab.favs {
      width: 40px;
    }
    .clip {
      overflow: hidden;
      width: 20px;
      -webkit-mask-image: linear-gradient(90deg, #000 55%, transparent);
      mask-image: linear-gradient(90deg, #000 55%, transparent);
    }
    .head {
      display: flex;
      align-items: center;
      height: 27px;
      padding-left: 26px;
    }
    .head b {
      width: 68px;
      font-weight: 600;
      letter-spacing: -0.3px;
    }
    .head .arrow {
      margin: 0 11px 0 7px;
    }
    .head .arrow.second {
      margin: 0 12px 0 5px;
    }
    .filter {
      display: flex;
      align-items: center;
      height: 24px;
      padding-left: 11px;
      gap: 4px;
    }
    .input {
      display: flex;
      align-items: center;
      justify-content: flex-end;
      width: 129px;
      height: 25px;
      border: 1px solid #a3aaa9;
      background: #fff;
    }
    .filter .arrow {
      margin: 0 2px 0 3px;
    }
    .rows {
      padding: 6px 0 5px;
      border-bottom: 2px solid #6bb647;
      margin: 0 3px 0 8px;
    }
    .row {
      display: flex;
      align-items: center;
      height: 16.9px;
      gap: 3px;
      font-size: 11px;
      letter-spacing: -0.35px;
    }
    .row.root {
      gap: 4px;
      padding-left: 1px;
    }
    .mark {
      width: 18px;
      padding-left: 8px;
    }
    .mark i {
      display: block;
      width: 0;
      border: 4px solid transparent;
      border-left: 6px solid #747b7b;
      border-right: 0;
    }
    .off {
      color: #b4b9b8;
    }
    .selected {
      background: #a9dcf9;
      color: #16222a;
    }
    .text {
      padding: 0 2px;
      line-height: 16px;
    }
  `];

  render() {
    return html`
      <div class="tabs">
        <div class="tab active">${icon('treeTab')}<span>Model Tree</span></div>
        <div class="tab folders">${icon('folders', 17, 16)}<span class="clip">Folder</span></div>
        <div class="tab favs">${icon('favs', 16)}<span class="clip">Favorites</span></div>
      </div>
      <div class="head">
        <b>Model Tree</b>
        ${icon('tools', 18)}${arrow()}${icon('list', 18)}${arrow('second')}${icon('hideTree', 18)}
      </div>
      <div class="filter">
        ${icon('funnel', 15, 16)}
        <div class="input">${icon('closeThin')}</div>
        ${arrow()}${icon('plus')}
      </div>
      <div class="rows">
        ${TREE.map(r => html`
          <div class=${classMap({ row: true, off: !!r.off, root: !r.level })}>
            ${r.level ? html`<span class="mark">${r.open ? html`<i></i>` : nothing}</span>` : nothing}
            ${icon(r.icon, 15, 16)}
            <span class=${classMap({ text: true, selected: !!r.selected })}>${r.text}</span>
          </div>`)}
      </div>
    `;
  }
}

@customElement('task-bar')
export class TaskBar extends LitElement {
  static styles = [baseStyles, css`
    :host {
      display: flex;
      align-items: stretch;
      height: 37px;
      background: linear-gradient(90deg, #213b43, #20363f 60%, #15273e);
      color: #fff;
      white-space: nowrap;
    }
    .start,
    .app,
    .cell {
      display: flex;
      align-items: center;
      justify-content: center;
      flex: none;
    }
    .start {
      width: 45px;
    }
    .search {
      display: flex;
      align-items: center;
      flex: none;
      width: 270px;
      padding-left: 9px;
      margin-right: 2px;
      gap: 6px;
      background: #f1f2f2;
      border-top: 1px solid #c9cdcd;
      border-bottom: 1px solid #c9cdcd;
      color: #333;
      font-size: 14px;
      letter-spacing: -0.5px;
    }
    .flowers {
      display: block;
      margin-left: auto;
    }
    .app {
      width: 44.800px;
    }
    .app.running {
      background: linear-gradient(#7db9e8, #7db9e8) center bottom / 36px 2px no-repeat;
    }
    .app.active {
      width: 43px;
      background: linear-gradient(#8cc4ee, #8cc4ee) center bottom / 43px 2px no-repeat, #46565f;
    }
    .tray {
      display: flex;
      align-items: center;
      margin-left: auto;
      letter-spacing: -0.3px;
    }
    .weather {
      display: flex;
      align-items: center;
      gap: 8px;
      width: 75px;
      font-size: 13.500px;
      letter-spacing: -0.7px;
    }
    .cell {
      width: 22.600px;
    }
    .lang {
      width: 34px;
      font-size: 11.8px;
      letter-spacing: -0.5px;
      text-align: center;
    }
    .clock {
      width: 62px;
      font-size: 11.300px;
      letter-spacing: -0.45px;
      line-height: 16px;
      text-align: center;
    }
    .notice {
      position: relative;
      width: 32px;
      margin-left: 15px;
    }
    .count {
      position: absolute;
      left: 13px;
      top: 4px;
      width: 15px;
      height: 15px;
      border: 1px solid #9aa5ae;
      border-radius: 50%;
      background: #39434b;
      font-size: 11px;
      line-height: 13px;
      text-align: center;
    }
  `];

  render() {
    const apps: [string, string][] = [
      ['taskview', ''], ['edge', ''], ['remote', ''], ['chromeUser', 'running'], ['mail', ''], ['explorer', 'running'],
      ['store', ''], ['calc', ''], ['chrome', ''], ['acrobat', 'running'], ['record', 'running'], ['creoApp', 'active'],
    ];
    return html`
      <div class="start">${icon('start', 24)}</div>
      <div class="search">
        ${icon('search', 22, 24)}<span>Type here to search</span>
        <svg class="flowers" width="70" height="34" viewBox="0 0 70 34">
          <path d="M4 9c2-4 6-2 7-4 3-5 9-5 12-1 5-1 7 3 7 6-6 2-20 2-26-1z" fill="#c9b7b4"/>
          <path d="M8 34c2-12 12-19 22-17 4-9 12-10 16-6 5-3 8 0 10 1 6-2 12 4 14 8v14z" fill="#d9a94e"/>
          <path d="M0 34c8-9 18-8 28-10 14-3 30 0 42 0v10z" fill="#57802c"/>
          <g fill="#e03b2c"><ellipse cx="11" cy="28" rx="6" ry="5" transform="rotate(-30 11 28)"/><ellipse cx="34" cy="20" rx="6" ry="4.500"/><ellipse cx="48" cy="28" rx="6" ry="5"/></g>
          <g fill="#4a5fd0"><circle cx="33" cy="30" r="4"/><circle cx="46" cy="17" r="3.500"/><circle cx="60" cy="22" r="4.500"/></g>
          <g fill="#fff"><circle cx="22" cy="29" r="2.500"/><circle cx="41" cy="22" r="2.500"/><circle cx="56" cy="29" r="2.800"/><circle cx="65" cy="21" r="2.500"/><circle cx="65" cy="29" r="2.200"/></g>
          <g fill="#f3c53c"><circle cx="22" cy="29" r="1"/><circle cx="41" cy="22" r="1"/><circle cx="56" cy="29" r="1.100"/><circle cx="65" cy="21" r="1"/></g>
        </svg>
      </div>
      ${apps.map(([name, state]) => html`<div class="app ${state}">${icon(name, 24)}</div>`)}
      <div class="tray">
        <div class="weather">${icon('sun', 22, 24)}<span>39°C</span></div>
        ${['trayUp', 'feather', 'meet', 'cloudSync', 'mic', 'update', 'wifi', 'volume'].map(n => html`<div class="cell">${icon(n, 20, 24)}</div>`)}
        <div class="lang">ENG</div>
        <div class="clock">5:15 pm<br>17/06/2023</div>
        <div class="notice">${icon('notify', 20, 24)}<span class="count">6</span></div>
      </div>
    `;
  }
}

@customElement('app-root')
export class AppRoot extends LitElement {
  static styles = [baseStyles, css`
    :host {
      display: block;
      box-sizing: border-box;
      position: relative;
      width: 1280px;
      height: 720px;
      overflow: hidden;
      padding: 0 2px;
      background: #000;
      font-family: 'Noto Sans', 'Open Sans', sans-serif;
      font-size: 11.500px;
      letter-spacing: -0.2px;
      color: #33393a;
      white-space: nowrap;
    }
    .title {
      display: flex;
      align-items: center;
      height: 26px;
      padding-left: 7px;
      background: #d8e1de;
      border-bottom: 1px solid #e9efed;
    }
    .brand {
      width: 55px;
      padding-left: 4px;
      font: 300 19px/24px Inter, sans-serif;
      letter-spacing: -0.7px;
      color: #3b4344;
    }
    .slot {
      display: flex;
      justify-content: center;
      flex: none;
    }
    .divider {
      width: 1px;
      height: 22px;
      background: #b9c2c0;
    }
    .doc {
      width: 215px;
      margin-left: 216px;
      text-align: center;
      font-size: 11px;
      color: #4a5252;
    }
    .frame {
      display: flex;
      margin-left: auto;
      gap: 9.500px;
      padding-right: 2px;
    }
    .tabs {
      display: flex;
      height: 26px;
      background: #3f4747;
      color: #fff;
      font-size: 12px;
    }
    .tab {
      display: flex;
      align-items: center;
      justify-content: center;
      padding-top: 1px;
    }
    .tab.file {
      background: linear-gradient(90deg, #4cb52f, #5cc23f);
    }
    .tab.model {
      background: #f6faf9;
      color: #4b8b2c;
      font-size: 12.500px;
      letter-spacing: -0.1px;
    }
    .helpers {
      display: flex;
      align-items: center;
      margin-left: auto;
      gap: 6px;
      padding-bottom: 3px;
    }
    .helpers .arrow {
      border-top-color: #fff;
    }
    .help {
      width: 11px;
      font-weight: 700;
      font-size: 12px;
      margin-left: 5px;
    }
    .ribbon {
      display: flex;
      height: 100px;
      background: #f6faf9;
      border-bottom: 1px solid #b4bbba;
    }
    .main {
      display: flex;
      height: 498px;
      background: #e5ebea;
    }
    .status {
      display: flex;
      align-items: center;
      height: 33px;
      padding: 0 0 1px 6px;
      background: #f6faf9;
      border-top: 2px solid #c9cecd;
      border-bottom: 1px solid #d5dad9;
    }
    .toggle {
      display: flex;
      align-items: center;
      justify-content: center;
      width: 20px;
      height: 22px;
      margin-right: 4.500px;
    }
    .toggle.on {
      border: 1px solid #a8afae;
      background: #e2e8e7;
    }
    .status .divider {
      margin-left: 5px;
    }
    .right {
      display: flex;
      align-items: center;
      margin-left: auto;
      margin-right: 12px;
    }
    .grip {
      width: 5px;
      height: 24px;
      margin-right: 2px;
      border: solid #c0c6c5;
      border-width: 0 1px;
    }
    .combo {
      display: flex;
      align-items: center;
      height: 22px;
      border: 1px solid #b4bab9;
      background: #fdfefe;
    }
    .combo .icon {
      margin: 0 4px 0 5px;
    }
    .drop {
      display: flex;
      align-items: center;
      justify-content: center;
      width: 14px;
      height: 20px;
      border-left: 1px solid #c4cac9;
    }
    .selected {
      width: 81px;
      margin-left: 6px;
      font-size: 11px;
      letter-spacing: -0.25px;
    }
    .geometry {
      width: 154px;
      justify-content: space-between;
      padding-left: 6px;
      letter-spacing: -0.4px;
    }
    .viewbar {
      position: absolute;
      left: 548px;
      top: 159px;
      display: flex;
      align-items: center;
      justify-content: center;
      width: 396px;
      height: 30px;
      border: 1px solid #a3abab;
      background: #f3f6f5;
    }
    .tool {
      display: flex;
      align-items: center;
      justify-content: center;
      width: 24.400px;
      height: 24px;
    }
    .tool.pressed::before {
      content: '';
      width: 0;
    }
    .tool.pressed {
      width: 22.400px;
      height: 22px;
      margin: 0 1px;
      background: #dde1e0;
      border: 1px solid #a6adac;
    }
    .overlay {
      position: absolute;
      left: 0;
      top: 0;
      pointer-events: none;
    }
  `];

  renderQuick() {
    const slots: [string, number][] = [
      ['new', 22], ['open', 23], ['save', 23], ['undo', 22], ['>', 13], ['redo', 24], ['>off', 10],
      ['regen', 24], ['windows', 24], ['>', 12], ['closeWin', 24],
    ];
    return slots.map(([name, w]) => html`
      <div class="slot" style=${styleMap({ width: `${w}px` })}>
        ${name[0] === '>' ? arrow(name.slice(1)) : icon(name)}
      </div>`);
  }

  renderOverlay() {
    return html`
      <svg class="overlay" width="1280" height="720" viewBox="0 0 1280 720">
        <g opacity="0.2">
          <path d="M659 137h354v354H659z" fill="#78aac6"/>
          <text x="684 795 853" y="391" font-family="Lato" font-style="italic" font-size="217" letter-spacing="0" fill="#f4cc80">SIC</text>
        </g>
        <g opacity="0.2" fill="none" stroke="#7fa6b2" stroke-width="10" stroke-linecap="round">
          <path stroke-linecap="butt" d="M286 406C262 406 253 388 253 371C253 352 269 336 290 336L295 336C295 312 312 297 332 297C338 297 344 298 348 300C359 270 383 252 413 252C452 252 480 282 480 322C480 328 480 332 479 336C496 340 507 354 507 371C507 390 493 406 473 406Z"/>
          <path d="M279 322C265 283 293 250 325 250C337 250 347 252 354 257"/>
          <path d="M382 282C402 268 425 268 443 282M454 292C461 301 463 312 463 322"/>
          <path d="M454 247C466 231 484 221 506 221C547 221 574 254 574 292C574 298 573 303 572 306C590 307 602 321 602 340C602 361 588 375 570 375L525 375"/>
        </g>
        <text x="242 294 352 414 480 546 630 667 762 822 869 937 1000" y="583" opacity="0.2" font-family="Lato" font-style="italic" font-size="60" letter-spacing="0" fill="#7fa6b2">SCHOOLINCLOUD</text>
        <circle cx="713" cy="174" r="27" fill="#e6e645" opacity="0.4"/>
        <path d="M711.500 172v15l3.500-3.300 2.600 5.800 2.400-1.100-2.600-5.600h5z" fill="#fff" stroke="#111"/>
        <g font-family="Inter" font-weight="700" fill="#fff" stroke="#3c4040" stroke-width="3" paint-order="stroke" stroke-linejoin="round" letter-spacing="0">
          <text x="524" y="21" font-size="15" textLength="54" lengthAdjust="spacingAndGlyphs">www.</text>
          <text x="579" y="21" font-size="17" textLength="125" lengthAdjust="spacingAndGlyphs">BANDICAM</text>
          <text x="704" y="21" font-size="14" textLength="48" lengthAdjust="spacingAndGlyphs">.COM</text>
        </g>
      </svg>
    `;
  }

  render() {
    return html`
      <div class="title">
        ${icon('cube')}<span class="brand">creo</span>
        ${this.renderQuick()}
        <div class="divider"></div>
        <div class="slot" style=${styleMap({ width: '20px' })}>${arrow()}</div>
        <span class="doc">PRT0001 (Active) - Creo Parametric 8.0</span>
        <div class="frame">${icon('minimize')}${icon('restore')}${icon('close')}</div>
      </div>
      <div class="tabs">
        ${TABS.map(([name, w]) => html`
          <div class="tab ${name.toLowerCase().replace(' ', '-')}" style=${styleMap({ width: `${w}px` })}>${name}</div>`)}
        <div class="helpers">
          ${icon('chevUp')}${icon('find')}${icon('learn')}${arrow()}<span class="help">?</span>
        </div>
      </div>
      <div class="ribbon">
        ${GROUPS.map(g => html`<ribbon-group .group=${g} style=${styleMap({ width: `${g.width}px` })}></ribbon-group>`)}
      </div>
      <div class="main">
        <model-tree></model-tree>
        <spring-model></spring-model>
      </div>
      <div class="status">
        <div class="toggle on">${icon('panes')}</div>
        <div class="toggle">${icon('globe', 17, 16)}</div>
        <div class="toggle">${icon('square')}</div>
        <div class="divider"></div>
        <div class="right">
          <div class="grip"></div>
          <div class="combo">${icon('binoc')}<div class="drop">${arrow()}</div></div>
          <span class="selected">1 selected</span>
          <div class="combo geometry"><span>Geometry</span><div class="drop">${arrow()}</div></div>
        </div>
      </div>
      <task-bar></task-bar>
      <div class="viewbar">
        ${VIEW_TOOLS.map(n => html`<div class=${classMap({ tool: true, pressed: PRESSED.includes(n) })}>${icon(n)}</div>`)}
      </div>
      ${this.renderOverlay()}
    `;
  }
}
